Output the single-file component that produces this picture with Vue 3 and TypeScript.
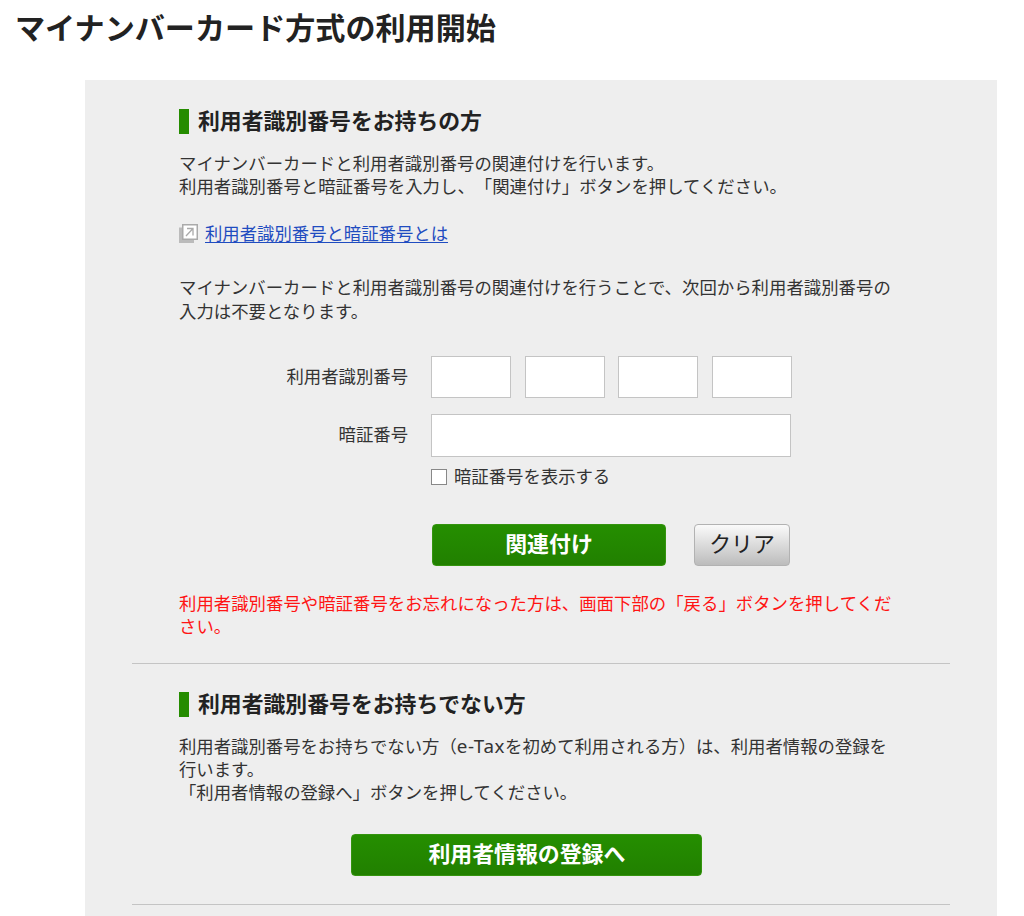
<script setup lang="ts">
import { ref } from 'vue'

const idParts = ref<string[]>(['', '', '', ''])
const pin = ref('')
const showPin = ref(false)

function clearForm(): void {
  idParts.value = ['', '', '', '']
  pin.value = ''
}
</script>

<template>
  <main class="page">
    <h1 class="page__title">マイナンバーカード方式の利用開始</h1>

    <div class="panel">
      <section class="section">
        <h2 class="section__heading">利用者識別番号をお持ちの方</h2>
        <p class="section__text">
          マイナンバーカードと利用者識別番号の関連付けを行います。<br />利用者識別番号と暗証番号を入力し、「関連付け」ボタンを押してください。
        </p>

        <div class="help">
          <svg class="help__icon" viewBox="0 0 19 19" aria-hidden="true">
            <path d="M0 3.5h4v11h11V19H0z" fill="#bbb" />
            <rect x="3.75" y="0.75" width="14.5" height="14.5" fill="#fff" stroke="#aaa" stroke-width="1.5" />
            <path d="M7 12l7-7.5M8 4.5h6v7" fill="none" stroke="#aaa" stroke-width="1.3" />
          </svg>
          <a class="help__link" href="#">利用者識別番号と暗証番号とは</a>
        </div>

        <p class="section__text">
          マイナンバーカードと利用者識別番号の関連付けを行うことで、次回から利用者識別番号の入力は不要となります。
        </p>

        <form class="form" @submit.prevent>
          <div class="form__row">
            <label class="form__label" for="id-0">利用者識別番号</label>
            <div class="form__parts">
              <input
                v-for="(_, index) in idParts"
                :id="`id-${index}`"
                :key="index"
                v-model="idParts[index]"
                class="form__input"
                type="text"
                maxlength="4"
              />
            </div>
          </div>
          <div class="form__row form__row--pin">
            <label class="form__label" for="pin">暗証番号</label>
            <input id="pin" v-model="pin" class="form__input form__input--wide" :type="showPin ? 'text' : 'password'" />
          </div>
          <label class="form__check">
            <input v-model="showPin" class="form__checkbox" type="checkbox" />
            <span>暗証番号を表示する</span>
          </label>
          <div class="form__actions">
            <button type="submit" class="button button--link">関連付け</button>
            <button type="button" class="button button--clear" @click="clearForm">クリア</button>
          </div>
        </form>

        <p class="section__text section__text--alert">
          利用者識別番号や暗証番号をお忘れになった方は、画面下部の「戻る」ボタンを押してください。
        </p>
      </section>

      <section class="section section--new">
        <h2 class="section__heading">利用者識別番号をお持ちでない方</h2>
        <p class="section__text section__text--new">
          利用者識別番号をお持ちでない方（<span class="latin">e-Tax</span>を初めて利用される方）は、利用者情報の登録を行います。<br />「利用者情報の登録へ」ボタンを押してください。
        </p>
        <button type="button" class="button button--register">利用者情報の登録へ</button>
      </section>

      <div class="panel__end"></div>
    </div>
  </main>
</template>

<style>
body {
  background: #fff;
  overflow: hidden;
}
</style>

<style scoped>
.page {
  box-sizing: border-box;
  height: 916px;
  overflow: hidden;
  color: #333;
  font-family: "Noto Sans CJK JP", sans-serif;
  font-size: 17.38px;
  line-height: 23.45px;
  text-spacing-trim: space-all;
}

.page__title {
  margin: 0 0 28px 15px;
  color: #222;
  font-size: 30.1px;
  font-weight: 700;
  line-height: 52px;
}

.panel {
  box-sizing: border-box;
  width: 912px;
  height: 840px;
  margin-left: 85px;
  padding: 0 47px;
  background: #eee;
}

.section {
  box-sizing: border-box;
  height: 583px;
  padding: 29px 47px 0;
}

.section--new {
  height: 241px;
  padding-top: 28px;
  border-top: 1.5px solid #c4c4c4;
}

.panel__end {
  border-top: 1.5px solid #c4c4c4;
}

.section__heading {
  height: 25px;
  margin: 0 0 17px;
  padding-left: 9px;
  border-left: 10px solid #258c00;
  color: #222;
  font-size: 21.85px;
  font-weight: 700;
  line-height: 21px;
  white-space: nowrap;
}

.section__text {
  max-width: 718px;
  margin: 0;
  letter-spacing: 0.04px;
}

.section__text--alert {
  margin-top: 25px;
  color: #ff1414;
}

.section__text--new {
  margin-top: -0.5px;
  letter-spacing: 0;
}

.latin {
  font-family: "Noto Sans", sans-serif;
  font-size: 18.8px;
  letter-spacing: 0.6px;
  line-height: 1;
}

.help {
  display: flex;
  align-items: center;
  gap: 7px;
  margin: 23px 0 31px;
}

.help__icon {
  width: 19px;
  height: 19px;
  margin-top: 2px;
}

.help__link {
  color: #1f4cc0;
  text-decoration: underline;
  text-decoration-thickness: 1px;
  text-underline-offset: 2px;
}

.form {
  margin-top: 34px;
}

.form__row {
  display: flex;
  align-items: center;
  gap: 23px;
}

.form__row--pin {
  margin-top: 16px;
}

.form__label {
  width: 229px;
  padding-bottom: 4px;
  text-align: right;
}

.form__parts {
  display: flex;
  gap: 13.5px;
}

.form__input {
  box-sizing: border-box;
  width: 80px;
  height: 42px;
  margin: 0;
  padding: 0 8px;
  border: 1px solid #c4c4c4;
  border-radius: 0;
  background: #fff;
  font: inherit;
}

.form__input--wide {
  width: 360px;
  height: 43px;
}

.form__check {
  display: flex;
  align-items: center;
  gap: 7px;
  width: 200px;
  margin: 7px 0 0 252px;
}

.form__checkbox {
  box-sizing: border-box;
  width: 16px;
  height: 16px;
  margin: 2px 0 0;
  border: 1px solid #888;
  background: #fff;
  appearance: none;
}

.form__checkbox:checked {
  background: #258c00;
}

.form__actions {
  display: flex;
  gap: 28px;
  margin: 36px 0 0 253px;
}

.button {
  box-sizing: border-box;
  display: block;
  height: 42px;
  margin: 0;
  padding: 0 0 3px;
  border: 1px solid #35940f;
  border-radius: 4px;
  background: linear-gradient(#258e00, #218000);
  color: #fff;
  font-family: inherit;
  font-size: 21.9px;
  font-weight: 700;
  line-height: 36px;
  cursor: pointer;
}

.button--link {
  width: 234px;
}

.button--clear {
  width: 96px;
  border-color: #b2b2b2;
  background: linear-gradient(#fafafa, #bcbcbc);
  color: #222;
  font-weight: 400;
}

.button--register {
  width: 351px;
  margin: 30px 0 0 172.4px;
}
</style>
